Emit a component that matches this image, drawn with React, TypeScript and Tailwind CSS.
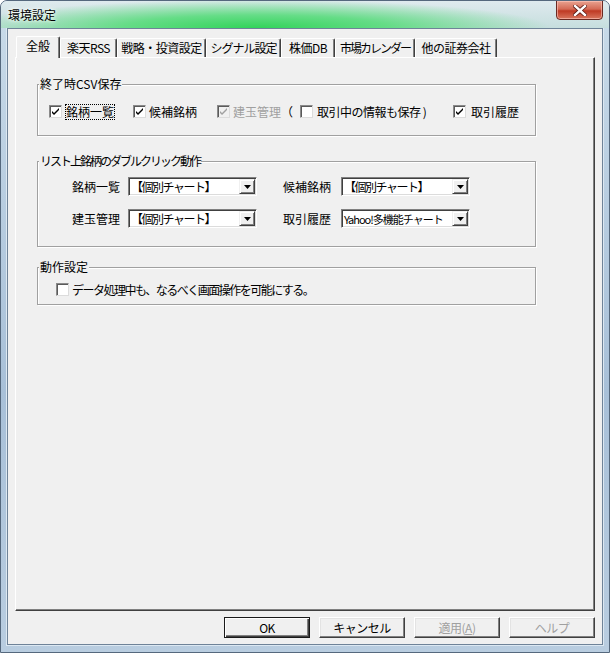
import type { ReactNode } from 'react'

/** 環境設定 dialog — Win7 aero frame with a classic tab panel inside */

function Check({ checked, disabled }: { checked?: boolean; disabled?: boolean }) {
  return (
    <span
      className={`flex h-[13px] w-[13px] shrink-0 items-center justify-center border border-[#8a8a8a] border-r-[#dcdcdc] border-b-[#dcdcdc] ${
        disabled ? 'bg-[#f0f0f0]' : 'bg-white'
      } shadow-[inset_1px_1px_0_#5a5a5a]`}
    >
      {checked && (
        <svg width="8" height="8" viewBox="0 0 8 8" className="ml-[1px] mt-[1px]">
          <path d="M0 3 L2 5 L7 0 L7 2 L2 7 L0 5 Z" fill={disabled ? '#a0a0a0' : '#000'} />
        </svg>
      )}
    </span>
  )
}

function Combo({ value, tight }: { value: string; tight?: boolean }) {
  return (
    <div className="flex h-[19px] w-[129px] items-center border border-[#808080] border-r-white border-b-white bg-white shadow-[inset_1px_1px_0_#404040,inset_-1px_-1px_0_#dcdcdc]">
      <span
        className={`min-w-0 flex-1 whitespace-nowrap pl-[2px] leading-[14px] ${
          tight ? 'text-[11px] tracking-[-1px]' : 'text-[12px] tracking-[-1.5px]'
        }`}
      >
        {value}
      </span>
      <span className="mr-[1px] flex h-[15px] w-[16px] shrink-0 items-center justify-center border border-[#f0f0f0] border-r-[#404040] border-b-[#404040] bg-[#f0f0f0] shadow-[inset_1px_1px_0_#fff,inset_-1px_-1px_0_#808080]">
        <svg width="7" height="4" viewBox="0 0 7 4">
          <path d="M0 0 H7 L3.5 4 Z" fill="#000" />
        </svg>
      </span>
    </div>
  )
}

function Btn({ children, disabled, primary }: { children: ReactNode; disabled?: boolean; primary?: boolean }) {
  return (
    <button
      type="button"
      className={`flex h-[21px] w-[86px] items-center justify-center bg-[#f0f0f0] text-[12px] leading-[14px] tracking-[-0.5px] ${
        primary
          ? 'border border-[#1a1a1a] shadow-[inset_1px_1px_0_#fff,inset_-1px_-1px_0_#404040,inset_-2px_-2px_0_#808080]'
          : 'border border-white border-r-[#404040] border-b-[#404040] shadow-[inset_-1px_-1px_0_#808080,inset_1px_1px_0_#e3e3e3]'
      } ${disabled ? 'text-[#a0a0a0]' : 'text-black'}`}
    >
      {children}
    </button>
  )
}

function Group({ title, className, titleClass, children }: { title: string; className: string; titleClass?: string; children: ReactNode }) {
  return (
    <div className={`relative border border-[#a0a0a0] shadow-[inset_1px_1px_0_#fff,1px_1px_0_#fff] ${className}`}>
      <span className={`absolute -top-[8px] left-[1px] bg-[#f0f0f0] px-[1px] text-[12px] leading-[14px] ${titleClass ?? ''}`}>{title}</span>
      {children}
    </div>
  )
}

const tabs = [
  { label: '楽天RSS', w: 'w-[57px]', t: 'tracking-[-0.5px]' },
  { label: '戦略・投資設定', w: 'w-[89px]', t: 'tracking-[-0.5px]' },
  { label: 'シグナル設定', w: 'w-[75px]', t: 'tracking-[-1px]' },
  { label: '株価DB', w: 'w-[54px]', t: 'tracking-[-0.5px]' },
  { label: '市場カレンダー', w: 'w-[80px]', t: 'tracking-[-2px]' },
  { label: '他の証券会社', w: 'w-[82px]', t: 'tracking-[-0.5px]' },
]

export default function App() {
  return (
    <div className="relative flex h-[653px] w-[610px] flex-col overflow-hidden rounded-t-[7px] border border-[#55687d] bg-[linear-gradient(180deg,#c9dbe9,#a8c0d8_60%,#b9cde0)] font-['Noto_Sans_CJK_JP','Noto_Sans',sans-serif] text-black">
      {/* title bar */}
      <div className="relative flex h-[27px] shrink-0 items-center bg-[radial-gradient(ellipse_55%_120%_at_42%_100%,rgba(50,212,90,1)_0%,rgba(90,220,125,0.9)_40%,rgba(190,230,215,0)_88%),linear-gradient(180deg,#dfeaee,#c6dede)] pl-[7px]">
        <span className="text-[12px] leading-[14px] [text-shadow:0_0_6px_#fff,0_0_3px_#fff]">環境設定</span>
        <div className="absolute right-[6px] -top-[1px] flex h-[20px] w-[47px] items-center justify-center rounded-b-[4px] border border-[#6a2a22] bg-[linear-gradient(180deg,#e9a391_0%,#d46a55_45%,#bf3a24_55%,#d9765e_100%)] shadow-[inset_0_0_0_1px_rgba(255,200,190,0.6)]">
          <svg width="14" height="11" viewBox="0 0 14 11">
            <path d="M2 1 L12 10 M12 1 L2 10" stroke="#5a1a14" strokeWidth="4" strokeLinecap="square" />
            <path d="M2 1 L12 10 M12 1 L2 10" stroke="#fff" strokeWidth="2.4" strokeLinecap="square" />
          </svg>
        </div>
      </div>

      {/* client area */}
      <div className="mx-[6px] mb-[7px] flex flex-1 flex-col border border-[#6f8398] bg-[#f0f0f0] shadow-[0_0_0_1px_#dce8f2]">
        {/* tab strip */}
        <div className="mt-[7px] flex h-[22px] items-end pl-[8px] text-[12px] leading-[14px]">
          <div className="relative z-10 flex h-[22px] w-[44px] items-start justify-center rounded-t-[2px] border border-b-0 border-white border-r-[#404040] bg-[#f0f0f0] pt-[2px] shadow-[inset_-1px_0_0_#808080]">
            全般
          </div>
          {tabs.map((t) => (
            <div
              key={t.label}
              className={`mb-[1px] flex h-[19px] ${t.w} ${t.t} items-center justify-center whitespace-nowrap rounded-t-[2px] border border-b-0 border-white border-r-[#404040] bg-[#f0f0f0] shadow-[inset_-1px_0_0_#808080]`}
            >
              {t.label}
            </div>
          ))}
        </div>

        {/* tab panel */}
        <div className="mx-[7px] -mt-[1px] flex flex-1 flex-col border border-white border-r-[#404040] border-b-[#404040] bg-[#f0f0f0] shadow-[inset_-1px_-1px_0_#808080]">
          <Group title="終了時CSV保存" className="ml-[21px] mt-[26px] h-[52px] w-[499px]">
            <div className="mt-[19px] flex h-[15px] items-center text-[12px] leading-[14px]">
              <span className="ml-[11px]">
                <Check checked />
              </span>
              <span className="ml-[3px] border border-dotted border-black px-0">銘柄一覧</span>
              <span className="ml-[18px]">
                <Check checked />
              </span>
              <span className="ml-[2px] w-[49px] pl-[1px]">候補銘柄</span>
              <span className="ml-[20px]">
                <Check checked disabled />
              </span>
              <span className="ml-[3px] w-[48px] text-[#a0a0a0]">建玉管理</span>
              <span className="w-[12px]">（</span>
              <span className="ml-[7px]">
                <Check />
              </span>
              <span className="ml-[4px] w-[114px] whitespace-nowrap tracking-[-0.5px]">取引中の情報も保存 )</span>
              <span className="ml-[22px]">
                <Check checked />
              </span>
              <span className="ml-[5px]">取引履歴</span>
            </div>
          </Group>

          <Group
            title="リスト上銘柄のダブルクリック動作"
            titleClass="tracking-[-2px]"
            className="ml-[21px] mt-[25px] h-[86px] w-[499px]"
          >
            <div className="mt-[15px] flex flex-col gap-[13px] text-[12px] leading-[14px]">
              <div className="flex h-[19px] items-center">
                <span className="ml-[34px] w-[48px]">銘柄一覧</span>
                <span className="ml-[8px]">
                  <Combo value="【個別チャート】" />
                </span>
                <span className="ml-[26px] w-[48px]">候補銘柄</span>
                <span className="ml-[10px]">
                  <Combo value="【個別チャート】" />
                </span>
              </div>
              <div className="flex h-[19px] items-center">
                <span className="ml-[34px] w-[48px]">建玉管理</span>
                <span className="ml-[8px]">
                  <Combo value="【個別チャート】" />
                </span>
                <span className="ml-[26px] w-[48px]">取引履歴</span>
                <span className="ml-[10px]">
                  <Combo value="Yahoo!多機能チャート" tight />
                </span>
              </div>
            </div>
          </Group>

          <Group title="動作設定" className="ml-[21px] mt-[20px] h-[38px] w-[499px]">
            <div className="mt-[14px] flex h-[15px] items-center text-[12px] leading-[14px]">
              <span className="ml-[18px]">
                <Check />
              </span>
              <span className="ml-[3px] tracking-[-1.5px]">データ処理中も、なるべく画面操作を可能にする。</span>
            </div>
          </Group>
        </div>

        {/* buttons */}
        <div className="mb-[6px] mr-[7px] mt-[6px] flex justify-end gap-[9px]">
          <Btn primary>OK</Btn>
          <Btn>キャンセル</Btn>
          <Btn disabled>
            <span>
              適用(<span className="underline">A</span>)
            </span>
          </Btn>
          <Btn disabled>ヘルプ</Btn>
        </div>
      </div>
    </div>
  )
}
